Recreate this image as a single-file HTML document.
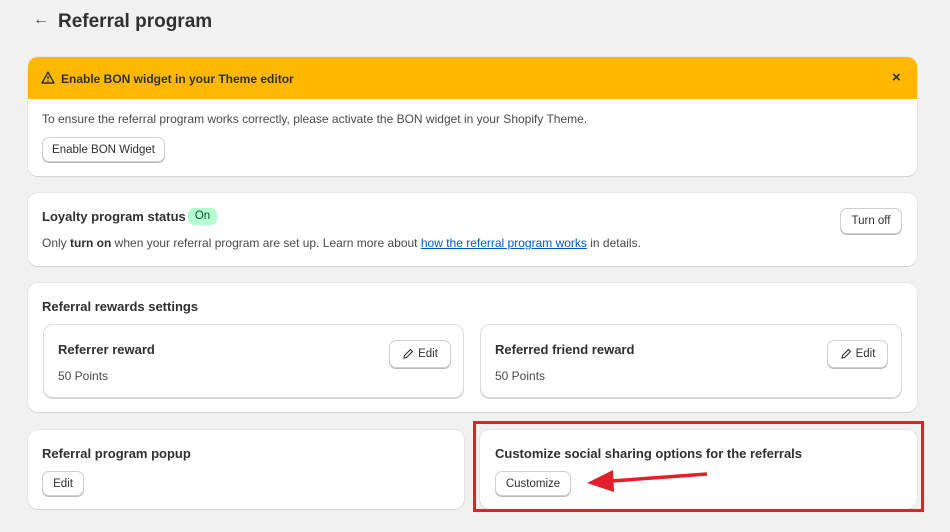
<!DOCTYPE html>
<html><head><style>
*{box-sizing:border-box;margin:0;padding:0}
body{width:950px;height:532px;background:#f1f1f1;font-family:"Liberation Sans",sans-serif;color:#303030;position:relative;overflow:hidden;font-size:12px}
.a{position:absolute}
.card{position:absolute;background:#fff;border-radius:10px;box-shadow:0 1px 0 #d4d4d4,0 0 0 1px #e6e6e6}
.in{position:absolute;background:#fff;border-radius:10px;border:1px solid #dcdcdc;box-shadow:0 1px 0 #d0d0d0}
.btn{position:absolute;background:#fff;border:1px solid #cfcfcf;border-radius:7px;box-shadow:0 1px 0 #bbb;font-size:11.5px;color:#303030;display:flex;align-items:center;justify-content:center;gap:4px}
.t{position:absolute;font-weight:bold;font-size:13px;color:#303030}
.s{position:absolute;font-size:12px;color:#4a4a4a}
</style></head><body>
<div class="a" style="left:33px;top:11px;font-size:16px;color:#444">←</div>
<div class="a" style="left:58px;top:11px;font-size:19px;font-weight:bold;color:#303030">Referral program</div>

<div class="card" style="left:28px;top:57px;width:889px;height:119px;overflow:hidden">
 <div class="a" style="left:0;top:0;width:889px;height:42px;background:#ffb800"></div>
 <svg class="a" style="left:13px;top:14px" width="14" height="13" viewBox="0 0 14 13"><path d="M7 1.2L13 12H1Z" fill="none" stroke="#303030" stroke-width="1.4" stroke-linejoin="round"/><path d="M7 5v3.3" stroke="#303030" stroke-width="1.4"/><circle cx="7" cy="10" r=".8" fill="#303030"/></svg>
 <div class="a" style="left:33px;top:15px;font-weight:bold;font-size:12px;color:#303030">Enable BON widget in your Theme editor</div>
 <div class="a" style="left:864px;top:12px;font-size:15px;font-weight:bold">×</div>
 <div class="s" style="left:14px;top:55px">To ensure the referral program works correctly, please activate the BON widget in your Shopify Theme.</div>
 <div class="btn" style="left:14px;top:80px;width:123px;height:25px">Enable BON Widget</div>
</div>

<div class="card" style="left:28px;top:193px;width:889px;height:73px">
 <div class="t" style="left:14px;top:16px">Loyalty program status</div>
 <div class="a" style="left:160px;top:15px;width:29px;height:17px;background:#b4fed2;border-radius:6px;font-size:11.5px;text-align:center;line-height:17px;color:#0c5132">On</div>
 <div class="s" style="left:14px;top:43px">Only <b style="color:#303030">turn on</b> when your referral program are set up. Learn more about <span style="color:#005bd3;text-decoration:underline">how the referral program works</span> in details.</div>
 <div class="btn" style="left:812px;top:15px;width:62px;height:26px">Turn off</div>
</div>

<div class="card" style="left:28px;top:283px;width:889px;height:129px">
 <div class="t" style="left:14px;top:16px">Referral rewards settings</div>
 <div class="in" style="left:15px;top:41px;width:421px;height:74px">
  <div class="t" style="left:14px;top:17px">Referrer reward</div>
  <div class="s" style="left:14px;top:44px">50 Points</div>
  <div class="btn" style="left:345px;top:15px;width:62px;height:28px"><svg width="12" height="12" viewBox="0 0 12 12"><path d="M2 10l.5-2.5L8.5 1.5l2 2-6 6z" fill="none" stroke="#303030" stroke-width="1.1"/></svg>Edit</div>
 </div>
 <div class="in" style="left:452px;top:41px;width:422px;height:74px">
  <div class="t" style="left:14px;top:17px">Referred friend reward</div>
  <div class="s" style="left:14px;top:44px">50 Points</div>
  <div class="btn" style="left:346px;top:15px;width:61px;height:28px"><svg width="12" height="12" viewBox="0 0 12 12"><path d="M2 10l.5-2.5L8.5 1.5l2 2-6 6z" fill="none" stroke="#303030" stroke-width="1.1"/></svg>Edit</div>
 </div>
</div>

<div class="card" style="left:28px;top:430px;width:436px;height:79px">
 <div class="t" style="left:14px;top:16px">Referral program popup</div>
 <div class="btn" style="left:14px;top:41px;width:42px;height:25px">Edit</div>
</div>

<div class="card" style="left:480px;top:430px;width:437px;height:79px">
 <div class="t" style="left:15px;top:16px">Customize social sharing options for the referrals</div>
 <div class="btn" style="left:15px;top:41px;width:76px;height:25px">Customize</div>
</div>
<div class="a" style="left:473px;top:421px;width:451px;height:91px;border:3px solid #e3202a"></div>
<svg class="a" style="left:0;top:0" width="950" height="532"><path d="M707 474L612 481" stroke="#e3202a" stroke-width="3.5"/><path d="M587 483L613 470L614 492Z" fill="#e3202a"/></svg>
</body></html>
